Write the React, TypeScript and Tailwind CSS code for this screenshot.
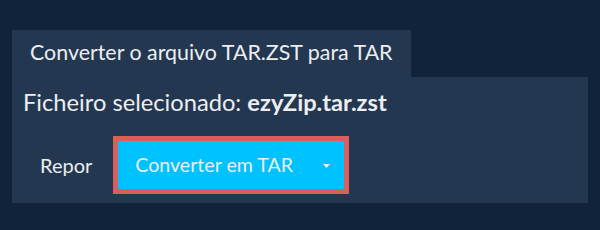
export default function App() {
  return (
    <div className="w-[600px] h-[230px] bg-[#10233a] pt-[30px] px-[12px] font-['Lato',sans-serif] text-[#eceef1]">
      <div className="inline-flex h-[47px] items-center px-[18px] pb-[2px] bg-[#233850] text-[21.4px] leading-[25px]">
        Converter o arquivo TAR.ZST para TAR
      </div>
      <div className="bg-[#233850] h-[126px] pl-[11px] pt-[11px]">
        <div className="text-[23.7px] leading-[28px]">
          Ficheiro selecionado: <span className="font-bold">ezyZip.tar.zst</span>
        </div>
        <div className="flex items-center mt-[20px]">
          <button className="pl-[17px] pr-[21px] text-[20px] leading-[24px]">Repor</button>
          <div className="border-[5px] border-[#db5e5e]">
            <button className="flex items-center justify-between w-[226px] h-[48px] bg-[#00c2ff] pl-[17px] pr-[14px] text-[19.6px] leading-[24px]">
              <span>Converter em TAR</span>
              <svg width="7" height="4" viewBox="0 0 7 4" className="mt-[1px]">
                <path d="M0 0h7L3.5 4z" fill="#eceef1" />
              </svg>
            </button>
          </div>
        </div>
      </div>
    </div>
  )
}
